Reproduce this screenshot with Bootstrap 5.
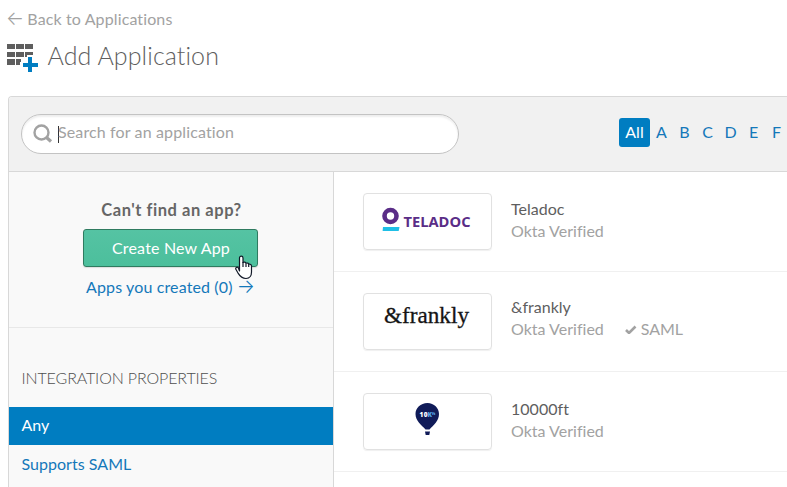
<!DOCTYPE html>
<html lang="en">
<head>
<meta charset="utf-8">
<meta name="viewport" content="width=device-width, initial-scale=1">
<title>Add Application</title>
<link href="https://cdn.jsdelivr.net/npm/bootstrap@5.3.0/dist/css/bootstrap.min.css" rel="stylesheet">
<style>
body{font-family:Lato,"Liberation Sans",sans-serif;font-size:16px;line-height:22px;color:#5e5e5e;background:#fff;overflow:hidden;height:487px}
a{color:#1478ba;text-decoration:none}
svg{display:block;flex:none}
.arrow{font-family:Inter,"DejaVu Sans",sans-serif;font-weight:300;font-size:19px;line-height:0;letter-spacing:0;margin-right:-1px}
.muted{color:#a2a2a2}
.back{padding:8px 0 0 6px;letter-spacing:.12px}
.back a{color:#a2a2a2}
.title-row{padding:8px 0 0 7px;height:66px}
.title-row h1{font-size:25px;line-height:34px;font-weight:300;letter-spacing:.09px;margin:0 0 0 8.500px}
.title-row svg{margin-top:4px}
.panel{margin-left:8px;height:391px;overflow:hidden;border:1px solid #d8d8d8;border-right:0;border-bottom:0;border-radius:4px 0 0 0}
.toolbar{height:75px;background:#f1f1f1;border-bottom:1px solid #d8d8d8;padding-left:12px}
.search{width:438px;height:40px;border:1px solid #c3c3c3;border-radius:20px;background:#fff;box-shadow:inset 0 2px 2px #eee;padding-left:10px}
.caret{width:1px;height:17px;background:#333;margin-left:5px}
.search .hint{letter-spacing:.13px;margin:-4px 0 0 -1px}
.letters{margin-left:160px;margin-top:-3px}
.letters a{text-align:center;width:23px;line-height:20px;padding-bottom:2px}
.letters a.current{background:#007dc1;color:#fff;width:31px;height:29px;line-height:27px;padding:0;border-radius:3px}
.sidebar{width:325px;background:#f9f9f9;border-right:1px solid #d8d8d8;height:315px}
.create{height:156px;border-bottom:1px solid #e8e8e8;padding:27px 2px 0 0}
.create strong{font-weight:700;font-size:16.500px;letter-spacing:.54px;color:#666;padding-left:3px}
.btn-create{width:175px;height:38px;margin-top:8px;padding:0 0 0 2px;border:1px solid #2f7b60;border-radius:3px;background:linear-gradient(#55c3a3,#4cbf9c);color:#fff!important;font-size:16px;line-height:36px;letter-spacing:.17px;box-shadow:0 1px 1px #ddd}
.created{margin-top:9px;letter-spacing:.13px;white-space:nowrap}
.heading{padding:39px 12.500px 0;height:79px;font-weight:300;font-size:16px;line-height:21px;letter-spacing:-.13px;margin:0;color:#4e4e4e}
.filters a{height:38px;line-height:37px;padding-left:12.500px;letter-spacing:.03px}
.filters a.active{background:#007dc1;color:#fff;line-height:36px}
.app-row{height:100px;border-bottom:1px solid #f0f0f0;padding-left:29px;padding-top:21px}
.logo-box{width:129px;height:57px;border:1px solid #e1e1e1;border-radius:4px;box-shadow:0 1px 1px #f0f0f0;flex:none}
.app-text{margin:5px 0 0 19px;letter-spacing:.02px}
.app-text.up{margin-top:3px}
.saml{padding-left:21px;letter-spacing:-.1px}
.hand{left:235px;top:255px}
</style>
</head>
<body class="position-relative">
<div class="back"><a href="#"><span class="arrow">←</span> Back to Applications</a></div>
<div class="title-row d-flex">
  <svg width="32" height="31" viewBox="0 0 32 31" shape-rendering="crispEdges">
    <path fill="#5e5e5e" d="M0 2h8v5H0zM9 2h8v5H9zM18 2h8v5h-8zM0 10h8v5H0zM9 10h8v5H9zM18 10h8v3h-6v2h-2zM0 17h8v6H0zM9 17h5v3h-1v3H9z"/>
    <path fill="#007dc1" d="M21 15h4v6h6v4h-6v5h-4v-5h-5v-4h5z"/>
  </svg>
  <h1>Add Application</h1>
</div>
<main class="panel">
  <div class="toolbar d-flex align-items-center">
    <div class="search d-flex align-items-center flex-shrink-0">
      <svg width="21" height="21" viewBox="0 0 21 21" fill="none" stroke="#a2a2a2"><circle cx="9.500" cy="8.500" r="7" stroke-width="2.400"/><path d="M14.500 13.500l4.500 4" stroke-width="3.200"/></svg>
      <span class="caret"></span><span class="hint muted">Search for an application</span>
    </div>
    <nav class="letters d-flex align-items-center"><a href="#" class="current">All</a><a href="#">A</a><a href="#">B</a><a href="#">C</a><a href="#">D</a><a href="#">E</a><a href="#" class="flex-shrink-0">F</a></nav>
  </div>
  <div class="d-flex">
    <aside class="sidebar flex-shrink-0">
      <div class="create d-flex flex-column align-items-center">
        <strong>Can't find an app?</strong>
        <a href="#" class="btn btn-create">Create New App</a>
        <a href="#" class="created">Apps you created (0) <span class="arrow">→</span></a>
      </div>
      <h2 class="heading">INTEGRATION PROPERTIES</h2>
      <nav class="filters d-flex flex-column"><a href="#" class="active">Any</a><a href="#">Supports SAML</a></nav>
    </aside>
    <section class="flex-grow-1">
      <article class="app-row d-flex">
        <div class="logo-box">
          <svg width="127" height="55" viewBox="0 0 127 55"><circle cx="26.500" cy="22" r="6" fill="none" stroke="#5a2d87" stroke-width="4.600"/><path fill="#1fbfe6" d="M19 33h16.500l-.8 4H18.600z"/><text x="39.500" y="32.700" font-family="Open Sans" font-weight="700" font-size="15" fill="#5a2d87" textLength="67" lengthAdjust="spacingAndGlyphs">TELADOC</text></svg>
        </div>
        <div class="app-text"><div>Teladoc</div><div class="muted">Okta Verified</div></div>
      </article>
      <article class="app-row d-flex">
        <div class="logo-box">
          <svg width="127" height="55" viewBox="0 0 127 55"><text x="20" y="29.300" font-family="Liberation Serif" font-size="23" fill="#151515" stroke="#151515" stroke-width=".3" textLength="85" lengthAdjust="spacingAndGlyphs">&amp;frankly</text></svg>
        </div>
        <div class="app-text up"><div>&amp;frankly</div><div class="muted d-flex"><span>Okta Verified</span><span class="saml d-flex align-items-center"><svg class="me-1" width="12" height="10" viewBox="0 0 12 10" fill="none" stroke="#a2a2a2" stroke-width="2.600"><path d="M1 6l3 3L10.500 2.500"/></svg>SAML</span></div></div>
      </article>
      <article class="app-row d-flex">
        <div class="logo-box">
          <svg width="127" height="55" viewBox="0 0 127 55"><path fill="#101b58" d="M63.500 9C70 9 75 14 75 20c0 7-5.500 11-9.500 15.500h-4C57.500 31 51.500 27 51.500 20c0-6 5-11 12-11zM61 37.500h5l-.7 3.500h-3.600z"/><text y="22.500" x="55.500" font-family="Open Sans" font-weight="800" font-size="6.500" fill="#fff" textLength="8">10</text><text y="22.500" x="63.500" font-family="Open Sans" font-weight="800" font-size="6.500" fill="#58a9e8">K<tspan font-size="4" dy="-1.500">ft</tspan></text></svg>
        </div>
        <div class="app-text"><div>10000ft</div><div class="muted">Okta Verified</div></div>
      </article>
    </section>
  </div>
</main>
<svg class="hand position-absolute" width="19" height="25" viewBox="0 0 19 25" fill="#fff" stroke="#111827" stroke-width="1.200" stroke-linejoin="round"><path d="M4.500 16V3c0-2.500 3.500-2.500 3.500 0v4.500c1-.8 2.700-.4 3 .8 1-.6 2.500-.2 2.700 1 1.300-.5 2.800.2 2.800 1.700V17c0 3-1.500 6.500-5.500 6.500-5 0-6.500-3-8-5.500L1 14.500c-1-1.800 1-3 2.300-1.800z"/><path fill="none" d="M8 7v5M11 8.500V12M13.700 9.500V12"/></svg>
<script src="https://cdn.jsdelivr.net/npm/bootstrap@5.3.0/dist/js/bootstrap.bundle.min.js"></script>
</body>
</html>
